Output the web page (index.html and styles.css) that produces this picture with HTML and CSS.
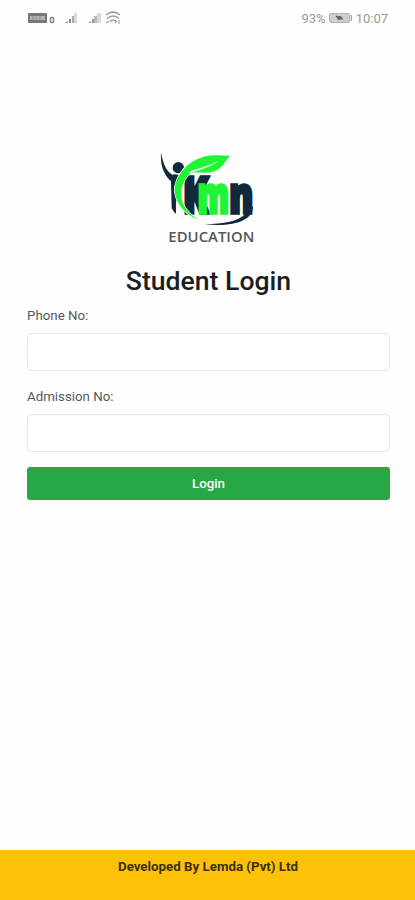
FILE: index.html
```
<!DOCTYPE html>
<html lang="en">
<head>
  <meta charset="UTF-8">
  <meta name="viewport" content="width=device-width, initial-scale=1.0">
  <title>Student Login</title>
  <link rel="stylesheet" href="styles.css">
</head>
<body>
  <!-- Phone status bar -->
  <div class="status-bar">
    <svg class="status-icons" width="96" height="16" viewBox="0 0 96 16">
      <rect x="1" y="3" width="19" height="10" rx="1" fill="#777"/>
      <rect x="3" y="6" width="15" height="4" fill="#b4b4b4"/>
      <path d="M6 6v4M9 6v4M13 6v4" stroke="#888"/>
      <rect x="23.500" y="7.500" width="3" height="5" rx="1" fill="none" stroke="#888" stroke-width="1.500"/>
      <path d="M38 13l3-2v2zM42 13v-4h2v4z" fill="#888"/>
      <path d="M45 13V6h2v7z" fill="#aaa"/>
      <path d="M47 13V3h3v10z" fill="#dadada"/>
      <path d="M61 13l3-2v2zM65 13v-4h2v4z" fill="#999"/>
      <path d="M67 13V6h3v7z" fill="#b8b8b8"/>
      <path d="M70 13V3h4v10z" fill="#dadada"/>
      <path d="M79 5q7-6 14 0M80 8.500q6-5 12 0M83 11.500q3-3 6 0" fill="none" stroke="#999" stroke-width="1.400"/>
      <path d="M79 13l3-2M92 10v4M88 13l2-2" stroke="#aaa" stroke-width="1.200"/>
    </svg>
    <div class="status-right">
      <span>93%</span>
      <svg width="24" height="12" viewBox="0 0 24 12">
        <rect x="0.500" y="1.500" width="20" height="9" rx="1.500" fill="#cdcdcd" stroke="#b4b4b4"/>
        <path d="M7 4l3 1 1-1 3 3-3 0-1 1z" fill="#666" stroke="#666"/>
        <rect x="21.500" y="3" width="1.500" height="6" fill="#aaa"/>
      </svg>
      <span>10:07</span>
    </div>
  </div>

  <main class="login">
    <svg class="logo" viewBox="0 0 345 345" role="img" aria-label="KMN Education">
      <g class="logo-letters">
        <text x="99" y="218" textLength="76" lengthAdjust="spacingAndGlyphs" font-size="150">K</text>
        <text class="logo-m" x="143" y="220" textLength="94" lengthAdjust="spacingAndGlyphs" font-size="148">m</text>
        <text x="238" y="220" textLength="72" lengthAdjust="spacingAndGlyphs" font-size="148">n</text>
      </g>
      <!-- Figure with raised arm -->
      <circle cx="85" cy="83" r="17" fill="#10293d"/>
      <path d="M33 37C31 70 37 101 63 124L65 205Q71 216 78 222Q74 160 99 113Q79 99 67 104Q42 91 33 37Z" fill="#10293d"/>
      <!-- Leaf and stem -->
      <path d="M151 241C92 223 62 165 79 124C92 90 119 65 151 54C179 42 211 47 241 47C225 61 221 83 192 94C171 102 145 96 124 98C112 106 105 117 100 129C83 169 98 216 151 241Z" fill="#1ff534" stroke="#fff" stroke-width="4" paint-order="stroke"/>
      <path d="M117 99C148 91 178 81 203 64C180 77 148 85 119 95Z" fill="#fff" stroke="#fff"/>
      <!-- Tail under the letters -->
      <path d="M309 200C309 239 256 262 164 253C222 252 263 244 286 222V200Z" fill="#10293d"/>
      <text class="logo-caption" x="55" y="306" textLength="258" lengthAdjust="spacingAndGlyphs">EDUCATION</text>
    </svg>

    <h1>Student Login</h1>

    <form>
      <label for="phone">Phone No:</label>
      <input type="text" id="phone">
      <label for="admission">Admission No:</label>
      <input type="text" id="admission">
      <button type="button">Login</button>
    </form>
  </main>

  <footer>Developed By Lemda (Pvt) Ltd</footer>
</body>
</html>
```
FILE: styles.css
```
/* General styles */
* {
  box-sizing: border-box;
}

body {
  margin: 0;
  height: 100vh;
  display: flex;
  flex-direction: column;
  background-color: #fefefe;
  color: #212529;
  font-family: Roboto, sans-serif;
  overflow: hidden;
}

/* Status bar */
.status-bar {
  display: flex;
  justify-content: space-between;
  align-items: center;
  height: 36px;
  padding: 0 27px;
  color: #999;
  font-size: 13px;
}

.status-icons {
  margin-top: -1px;
}

.status-right {
  display: flex;
  align-items: center;
  gap: 3px;
}

/* Login form */
.login {
  flex: 1;
  display: flex;
  flex-direction: column;
  padding: 104px 25px 0 27px;
}

.logo {
  width: 115px;
  height: 115px;
  margin-left: 123px;
}

.logo-letters {
  font-family: "Open Sans", sans-serif;
  font-weight: 800;
  fill: #10293d;
  stroke: #10293d;
  stroke-width: 11px;
}

.logo-m {
  fill: #1ff534;
  stroke: #1ff534;
}

.logo-caption {
  font-family: "Open Sans", sans-serif;
  font-size: 43px;
  font-weight: 600;
  fill: #55575a;
}

h1 {
  margin: 10px 0 10px;
  color: #1b1d20;
  font-size: 26.600px;
  font-weight: 500;
  line-height: 32px;
  text-align: center;
}

form {
  display: flex;
  flex-direction: column;
}

label {
  margin-bottom: 9px;
  color: #55585b;
  font-size: 13.300px;
  line-height: 17px;
}

input {
  height: 38px;
  margin-bottom: 17px;
  padding: 6px 12px;
  border: 1px solid #e3e5e7;
  border-radius: 4px;
  background-color: #fff;
}

input:last-of-type {
  margin-bottom: 15px;
}

button {
  height: 33px;
  padding: 0;
  border: 0;
  border-radius: 3px;
  background-color: #28a745;
  color: #fff;
  font-family: inherit;
  font-size: 13.300px;
  font-weight: 500;
}

/* Footer */
footer {
  height: 50px;
  padding: 9px 0 0 1px;
  background-color: #ffc107;
  color: #3b3011;
  font-size: 13.300px;
  font-weight: 700;
  line-height: 16px;
  text-align: center;
}
```
